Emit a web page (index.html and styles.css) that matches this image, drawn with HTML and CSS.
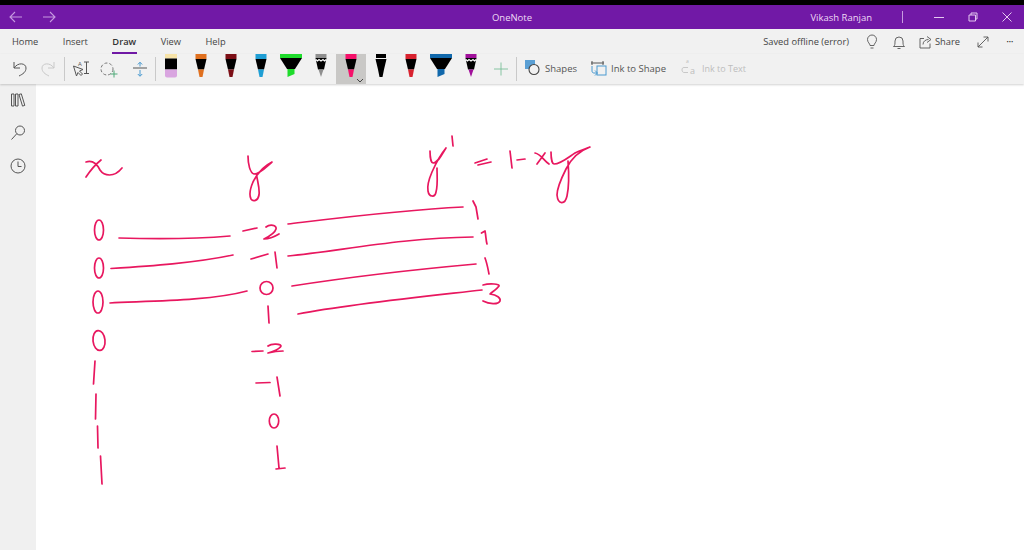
FILE: index.html
```html
<!DOCTYPE html>
<html lang="en">
<head>
<meta charset="utf-8">
<title>OneNote</title>
<link rel="stylesheet" href="styles.css">
</head>
<body>
<svg class="defs" width="0" height="0" aria-hidden="true">
  <symbol id="marker" viewBox="0 0 30 30">
    <rect class="pen-color" x="9.500" y="0" width="11" height="5"/>
    <path class="pen-body" d="M9.500 5H20.500L18 15.500H12Z"/>
    <path class="pen-color" d="M12 15.500H18L16.500 23H13.500Z"/>
  </symbol>
  <symbol id="liner" viewBox="0 0 30 30">
    <rect class="pen-color" x="10" y="0" width="10" height="4"/>
    <path class="pen-body" d="M9.500 5H20.500L18 15.500 16.500 23H13.500L12 15.500Z"/>
  </symbol>
  <symbol id="wide" viewBox="0 0 30 30">
    <rect class="pen-color" x="4" y="0" width="22" height="4"/>
    <path class="pen-body" d="M4 4H26L19 15H11Z"/>
    <path class="pen-color" d="M11.500 15H18.500V20L11.500 23Z"/>
  </symbol>
  <symbol id="glitter" viewBox="0 0 30 30">
    <rect class="pen-color" x="9.500" y="0" width="11" height="4"/>
    <path class="pen-body" d="M9.500 4H20.500L18 15.500H12Z"/>
    <path class="pen-white" d="M9.800 5.500L11.500 7 13 5.500 15 7 17 5.500 18.500 7 20.200 5.500" />
    <path class="pen-color" d="M12.500 15.500H17.500L15 23Z"/>
  </symbol>
</svg>

<header class="titlebar">
  <div class="title-left">
    <svg class="tb-icon" viewBox="0 0 16 16"><path d="M14 8H2M7 3L2 8l5 5"/></svg>
    <svg class="tb-icon" viewBox="0 0 16 16"><path d="M2 8h12M9 3l5 5-5 5"/></svg>
  </div>
  <div class="title-name">OneNote</div>
  <div class="title-right">
    <span class="user">Vikash Ranjan</span>
    <span class="tb-sep"></span>
    <svg class="win-icon" viewBox="0 0 12 12"><path d="M1 6.500h10"/></svg>
    <svg class="win-icon" viewBox="0 0 12 12"><path d="M2 4h6.500v6H2zM4 4V2h6v6H8.500"/></svg>
    <svg class="win-icon" viewBox="0 0 12 12"><path d="M1.500 1.500l9 9M10.500 1.500l-9 9"/></svg>
  </div>
</header>

<nav class="tabs">
  <div class="tab-list">
    <span class="tab">Home</span>
    <span class="tab">Insert</span>
    <span class="tab tab-active">Draw</span>
    <span class="tab">View</span>
    <span class="tab">Help</span>
  </div>
  <div class="tab-actions">
    <span class="status">Saved offline (error)</span>
    <svg class="act-icon" viewBox="0 0 16 16"><path d="M6 11.500C6 9.500 3.500 8.500 3.500 5.500a4.500 4.500 0 0 1 9 0c0 3-2.500 4-2.500 6zM6.500 14h3"/></svg>
    <svg class="act-icon icon-bell" viewBox="0 0 16 16"><path d="M2.500 12.500c1.500-1 1.500-2.500 1.500-5.500a4 4 0 0 1 8 0c0 3 0 4.500 1.500 5.500zM6.500 14.500h3"/></svg>
    <span class="share">
      <svg class="share-icon" viewBox="0 0 14 14"><path d="M5 3.500H1v9.500h10V8.500M4 9.500c0-3.500 3-5 5.500-5M8 1.500l4 3-4 3"/></svg>
      Share
    </span>
    <svg class="act-icon" viewBox="0 0 16 16"><path d="M3 13L13 3M8.500 3H13v4.500M3 8.500V13h4.500"/></svg>
    <span class="dots">•••</span>
  </div>
</nav>

<section class="tools">
  <button class="tool"><svg class="tool-svg" viewBox="0 0 30 30"><path class="st-dark" d="M10 8v6h6M10 14c4-6 12-5 12 0 0 4-3 6-7 8"/></svg></button>
  <button class="tool"><svg class="tool-svg" viewBox="0 0 30 30"><path class="st-light" d="M20 8v6h-6M20 14c-4-6-12-5-12 0 0 4 3 6 7 8"/></svg></button>
  <span class="sep"></span>
  <button class="tool"><svg class="tool-svg" viewBox="0 0 30 30"><path class="st-dark" d="M8.500 12l3 10 1.500-3.500 3 3 1.500-1.500-3-3 3.500-1.500zM19 8h5M19 19.500h5M21.500 8v11.500"/><text class="mini" x="13" y="12">A</text></svg></button>
  <button class="tool"><svg class="tool-svg" viewBox="0 0 30 30"><circle class="st-dash" cx="12" cy="15" r="6"/><path class="st-green" d="M19 16.500v7M15.500 20h7"/></svg></button>
  <button class="tool"><svg class="tool-svg" viewBox="0 0 30 30"><path class="st-bar" d="M8 14h14"/><path class="st-blue" d="M15 8.500v4M12.800 10.500L15 8.200 17.200 10.500M15 16v6M12.800 20L15 22.300 17.200 20"/></svg></button>
  <span class="sep"></span>
  <button class="tool pen pen-lilac"><svg class="tool-svg" viewBox="0 0 30 30"><rect class="pen-cream" x="9" y="0" width="12" height="4.500"/><rect class="pen-body" x="9" y="4.500" width="12" height="11"/><path class="pen-color" d="M9 15.500h12v6a2 2 0 0 1-2 2h-8a2 2 0 0 1-2-2z"/></svg></button>
  <button class="tool pen pen-orange"><svg class="tool-svg"><use href="#marker"/></svg></button>
  <button class="tool pen pen-maroon"><svg class="tool-svg"><use href="#marker"/></svg></button>
  <button class="tool pen pen-cyan"><svg class="tool-svg"><use href="#marker"/></svg></button>
  <button class="tool pen pen-lime"><svg class="tool-svg"><use href="#wide"/></svg></button>
  <button class="tool pen pen-silver"><svg class="tool-svg"><use href="#glitter"/></svg></button>
  <button class="tool pen pen-pink tool-selected">
    <svg class="tool-svg"><use href="#marker"/></svg>
    <svg class="chevron" viewBox="0 0 8 5"><path d="M1 1l3 3 3-3"/></svg>
  </button>
  <button class="tool pen pen-black"><svg class="tool-svg"><use href="#liner"/></svg></button>
  <button class="tool pen pen-red"><svg class="tool-svg"><use href="#marker"/></svg></button>
  <button class="tool pen pen-blue"><svg class="tool-svg"><use href="#wide"/></svg></button>
  <button class="tool pen pen-purple"><svg class="tool-svg"><use href="#glitter"/></svg></button>
  <button class="tool"><svg class="tool-svg" viewBox="0 0 30 30"><path class="st-green-thin" d="M15 8.500v13M8 15h14"/></svg></button>
  <span class="sep"></span>
  <button class="tool-label label-shapes">
    <svg class="label-svg" viewBox="0 0 18 18"><rect class="fill-blue" x="1" y="1" width="10" height="9"/><circle class="st-ring" cx="10" cy="10.500" r="5"/></svg>
    Shapes
  </button>
  <button class="tool-label label-ink">
    <svg class="label-svg" viewBox="0 0 18 18"><path class="st-dark" d="M1 4h13M2 2v4M13 2v4"/><rect class="st-blue" x="7" y="7" width="9" height="9"/><path class="st-blue" d="M2 7v5c0 1.500 1 2 2 2h3M5 11.500L7.500 14 5 16.500"/></svg>
    Ink to Shape
  </button>
  <button class="tool-label label-text">
    <svg class="label-svg" viewBox="0 0 18 18"><text class="mini-off" x="5" y="4">a</text><text class="big-off" x="9" y="15">a</text><path class="st-off" d="M7 8.500H3c-1.500 0-2 1-2 2.500s1 2.500 2 2.500h4"/></svg>
    Ink to Text
  </button>
</section>

<div class="workspace">
  <aside class="rail">
    <svg class="rail-icon" viewBox="0 0 18 18"><path d="M2.500 3h2.500v12H2.500zM6.500 3h2.500v12H6.500zM10 3.500l2.300-.7 3.500 11.600-2.300.7z"/></svg>
    <svg class="rail-icon" viewBox="0 0 18 18"><circle cx="11" cy="6.500" r="4.500"/><path d="M7.800 9.700L2.500 15.500"/></svg>
    <svg class="rail-icon" viewBox="0 0 18 18"><circle cx="9" cy="9" r="7"/><path d="M9 4.500V9.500H12.500"/></svg>
  </aside>
  <main class="page">
    <svg class="ink" viewBox="36 83 988 467" aria-label="Handwritten table of x, y and y' = 1 - xy">
      <path d="M86 161C92 159 97 163 100 169C104 175 114 177 122 167M101 159C96 163 90 170 86 176"/>
      <path d="M248 155C248 163 250 172 254 173C260 173 266 166 272 161C264 165 257 173 253 181C250 188 249 194 251 198C253 201 258 200 259 194C260 187 257 179 256.500 173"/>
      <path d="M430 150C430 155 431 162 433 162C438 162 442 153 446 147C441 153 436 162 432 171C429 178 427 185 428 190C429 196 435 197 436 191C438 184 437 174 437 167"/>
      <path d="M452 135L453 145M475 162L487 158M478 164L491 161"/>
      <path d="M510 150L512 167M517 159L525 158M535 152C541 153 544 160 549 163M545 152L537 163"/>
      <path d="M551 151C551 156 552 163 554 163C561 163 570 155 575 152C579 150 585 148 590 146C579 150 571 158 566 168C562 176 557 187 557 194C558 204 565 204 567 195C569 186 569 173 568 160"/>
      <ellipse cx="99" cy="229" rx="4.500" ry="10"/>
      <ellipse cx="99" cy="267" rx="4.500" ry="10"/>
      <ellipse cx="98" cy="301" rx="5" ry="11"/>
      <ellipse cx="99" cy="339.500" rx="6" ry="10" transform="rotate(-6 99 339.500)"/>
      <path d="M95 360L93.500 383M96 393L95.500 418M97.500 425L98 447M100.500 455L102 483"/>
      <path d="M119 237C150 238 195 238 230 235M111 267.500C150 265 195 262 233 254M110 302C150 300 210 300 247 290"/>
      <path d="M243 230L257 227M266 226C270 223 277 224 276 228C275 232 268 236 264 238C268 238 274 236 279 233"/>
      <path d="M251 258L268 253M275 251L277 267"/>
      <ellipse cx="266.500" cy="287" rx="6.500" ry="6.500"/>
      <path d="M268 305L269 322"/>
      <path d="M252 350.500L263 350M268 345C272 342 281 343 281 345C280 348 272 351 268 352C272 351 278 350 283 350"/>
      <path d="M256 382L270 381.500M277 376L280 395"/>
      <ellipse cx="274" cy="420" rx="4.700" ry="7"/>
      <path d="M277 445L279 467M276 468L285 467"/>
      <path d="M288 223C330 218 400 209 463 206M288 255C340 250 400 237 473 236M292 285C350 276 420 268 476 263M298 313C350 303 420 296 482 289"/>
      <path d="M473 200L476 206L478 218M481.500 232L485 230C486 235 486 240 487 243M485 257C487 262 488 268 489 273"/>
      <path d="M483 284C490 282 500 283 499 285C497 288 492 291 490 293C497 294 501 297 500 300C498 304 489 303 483 300"/>
    </svg>
  </main>
</div>
</body>
</html>
```

FILE: styles.css
```css
* { box-sizing: border-box; }

html, body {
  margin: 0;
  height: 100%;
  overflow: hidden;
}

body {
  display: flex;
  flex-direction: column;
  width: 1024px;
  height: 550px;
  background: #fff;
  border-top: 5px solid #000;
  font-family: "Open Sans", "Noto Sans", sans-serif;
  font-size: 9.3px;
  color: #444;
}

.defs { position: absolute; }

/* title bar */
.titlebar {
  flex: 0 0 24px;
  display: grid;
  grid-template-columns: 1fr auto 1fr;
  align-items: center;
  background: #7119a6;
  color: #eed9f5;
}

.title-left {
  display: flex;
  gap: 17px;
  padding-left: 8px;
}

.tb-icon {
  width: 16px;
  height: 16px;
  fill: none;
  stroke: #c79ae0;
  stroke-width: 1.1;
}

.title-name { font-size: 9.5px; }

.title-right {
  display: flex;
  align-items: center;
  justify-content: flex-end;
  padding-right: 11px;
  font-size: 9.5px;
}

.user { margin-right: 30px; }

.tb-sep {
  width: 1px;
  height: 12px;
  margin-right: 30px;
  background: #c79ae0;
}

.win-icon {
  width: 12px;
  height: 12px;
  margin-left: 22px;
  fill: none;
  stroke: #e5c8f0;
  stroke-width: 1;
}

.tb-sep + .win-icon { margin-left: 0; }

/* tabs */
.tabs {
  flex: 0 0 24px;
  display: flex;
  justify-content: space-between;
  background: #f1f1f1;
}

.tab-list {
  display: flex;
  gap: 24.500px;
  padding-left: 12px;
}

.tab {
  position: relative;
  line-height: 25px;
}

.tab-active {
  font-weight: 600;
  color: #333;
}

.tab-active::after {
  content: "";
  position: absolute;
  left: 0;
  right: -1px;
  bottom: 0;
  height: 2px;
  background: #7119a6;
}

.tab-actions {
  display: flex;
  align-items: center;
  padding-right: 8px;
}

.status { margin-right: 15px; }

.act-icon {
  width: 16px;
  height: 16px;
  fill: none;
  stroke: #555;
  stroke-width: .9;
}

.icon-bell { margin-left: 11px; }

.share {
  display: flex;
  align-items: center;
  gap: 2px;
  margin: 0 15px 0 12px;
}

.share-icon {
  width: 14px;
  height: 14px;
  fill: none;
  stroke: #555;
  stroke-width: .9;
}

.dots {
  width: 12px;
  margin-left: 13px;
  font-size: 6px;
  text-align: center;
  white-space: nowrap;
  color: #333;
}

/* tools */
.tools {
  flex: 0 0 30px;
  display: flex;
  align-items: stretch;
  padding-left: 4px;
  background: #f1f1f1;
  box-shadow: 0 1px 2px rgba(0, 0, 0, .18);
  position: relative;
  z-index: 1;
  font-size: 9.500px;
}

.tool {
  position: relative;
  width: 30px;
  padding: 0;
  border: 0;
  background: none;
  font: inherit;
}

.tool-selected { background: #c9c8c6; }

.tool-svg {
  display: block;
  width: 30px;
  height: 30px;
}

.chevron {
  position: absolute;
  right: 2px;
  bottom: 1px;
  width: 8px;
  height: 5px;
  fill: none;
  stroke: #444;
}

.sep {
  width: 1px;
  margin: 3px 0;
  background: #c9c9c9;
}

.tool-label {
  display: flex;
  align-items: center;
  padding: 0 0 2px;
  border: 0;
  background: none;
  font: inherit;
  color: #555;
}

.label-svg {
  width: 18px;
  height: 18px;
}

.label-shapes {
  gap: 3px;
  margin-left: 7px;
}

.label-ink {
  gap: 3px;
  margin-left: 13px;
}

.label-text {
  gap: 3px;
  margin-left: 15px;
  font-size: 9px;
  color: #bdbdbd;
}

/* pen colours */
.pen-body { fill: #000; }
.pen-color { fill: var(--pen); }
.pen-cream { fill: #f7e3a8; }
.pen-white { fill: none; stroke: #fff; stroke-width: 1.200; }

.pen-lilac { --pen: #d9a5e0; }
.pen-orange { --pen: #e0701f; }
.pen-maroon { --pen: #7c0f16; }
.pen-cyan { --pen: #1f9ed4; }
.pen-lime { --pen: #1fdc2c; }
.pen-silver { --pen: #8f8f8f; }
.pen-pink { --pen: #f5116a; }
.pen-black { --pen: #000; }
.pen-red { --pen: #d8222f; }
.pen-blue { --pen: #1168ab; }
.pen-purple { --pen: #a0109a; }

/* tool strokes */
.st-dark, .st-light, .st-green, .st-green-thin, .st-blue, .st-dash, .st-off, .st-ring, .st-bar {
  fill: none;
  stroke-width: 1;
}

.st-dark { stroke: #555; }
.st-light { stroke: #c9c9c9; }
.st-bar { stroke: #888; stroke-width: 1.500; }
.st-green { stroke: #4faa78; }
.st-green-thin { stroke: #6cba90; stroke-width: .8; }
.st-blue { stroke: #4a9ad0; }
.st-off { stroke: #c8c8c8; }
.st-dash { stroke: #777; stroke-dasharray: 3 2; }
.st-ring { stroke: #444; fill: #f1f1f1; stroke-width: 1.100; }
.fill-blue { fill: #5a9fd4; }

.mini { font-size: 6px; fill: #555; }
.mini-off { font-size: 5px; fill: #bdbdbd; }
.big-off { font-size: 9px; fill: #bdbdbd; }

/* workspace */
.workspace {
  flex: 1;
  display: flex;
  min-height: 0;
}

.rail {
  flex: 0 0 36px;
  display: flex;
  flex-direction: column;
  align-items: center;
  gap: 15px;
  padding-top: 7px;
  background: #f0f0f0;
}

.rail-icon {
  width: 18px;
  height: 18px;
  fill: none;
  stroke: #555;
  stroke-width: 1;
}

.page {
  flex: 1;
  min-width: 0;
}

.ink {
  display: block;
  width: 988px;
  height: 467px;
  fill: none;
  stroke: #e8175f;
  stroke-width: 1.700;
  stroke-linecap: round;
  stroke-linejoin: round;
}
```
